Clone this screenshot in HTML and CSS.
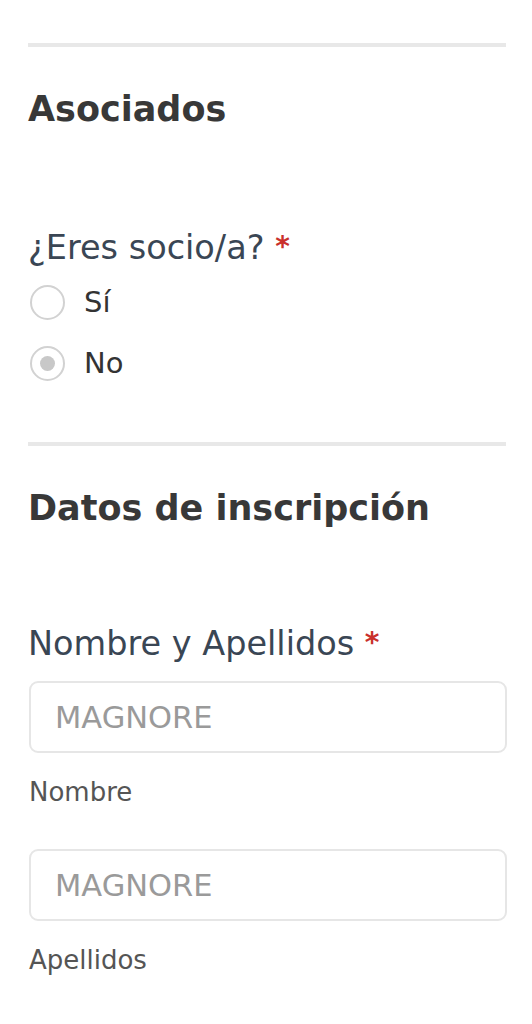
FILE: index.html
```html
<!DOCTYPE html>
<html lang="es">
<head>
  <meta charset="UTF-8">
  <title>Inscripción</title>
  <link rel="stylesheet" href="styles.css">
</head>
<body>
  <form class="formulario">
    <!-- Asociados -->
    <section class="bloque">
      <h2>Asociados</h2>
      <div class="pregunta">
        <p class="etiqueta">¿Eres socio/a? <span class="req">*</span></p>
        <label class="opcion">
          <span class="radio"></span>
          <span>Sí</span>
        </label>
        <label class="opcion">
          <span class="radio marcado"></span>
          <span>No</span>
        </label>
      </div>
    </section>

    <!-- Datos de inscripción -->
    <section class="bloque">
      <h2>Datos de inscripción</h2>
      <div class="pregunta nombre">
        <p class="etiqueta">Nombre y Apellidos <span class="req">*</span></p>
        <input type="text" name="nombre" placeholder="MAGNORE" />
        <p class="ayuda">Nombre</p>
        <input type="text" name="apellidos" placeholder="MAGNORE" />
        <p class="ayuda">Apellidos</p>
      </div>
    </section>
  </form>
</body>
</html>
```

FILE: styles.css
```css
body {
  margin: 0;
  background-color: #fff;
  font-family: "DejaVu Sans", sans-serif;
  color: #333;
}

.formulario {
  padding: 43px 26px 0 28px;
}

.bloque {
  border-top: 4px solid #e8e8e8;
}

.bloque h2 {
  margin: 41px 0 0;
  font-size: 35px;
  line-height: 43px;
  font-weight: bold;
  color: #383838;
}

.pregunta {
  margin-top: 96px;
}

.pregunta.nombre {
  margin-top: 93px;
}

.etiqueta {
  margin: 0;
  font-size: 33.5px;
  line-height: 40px;
  color: #3a4654;
}

.req {
  color: #c9302c;
  font-size: 28px;
  font-weight: bold;
  vertical-align: 3px;
}

.opcion {
  display: flex;
  align-items: center;
  gap: 19px;
  height: 48px;
  font-size: 29px;
  color: #333;
}

.opcion:first-of-type {
  margin-top: 10px;
}

.opcion + .opcion {
  margin-top: 13px;
  margin-bottom: 55px;
}

.radio {
  width: 31px;
  height: 31px;
  border: 2px solid #d2d2d2;
  border-radius: 50%;
  margin-left: 2px;
  display: flex;
  align-items: center;
  justify-content: center;
}

.radio.marcado::after {
  content: "";
  width: 15px;
  height: 15px;
  border-radius: 50%;
  background-color: #c8c8c8;
}

input {
  display: block;
  box-sizing: border-box;
  width: 100%;
  height: 72px;
  margin: 17px 0 0 1px;
  padding: 0 24px;
  border: 2px solid #e6e6e6;
  border-radius: 9px;
  font-family: "DejaVu Sans", sans-serif;
  font-size: 30.5px;
  color: #333;
}

input::placeholder {
  color: #9a9a9a;
}

.ayuda {
  margin: 23px 0 0 1px;
  font-size: 26px;
  line-height: 32px;
  color: #555;
}

.ayuda + input {
  margin-top: 41px;
}
```
